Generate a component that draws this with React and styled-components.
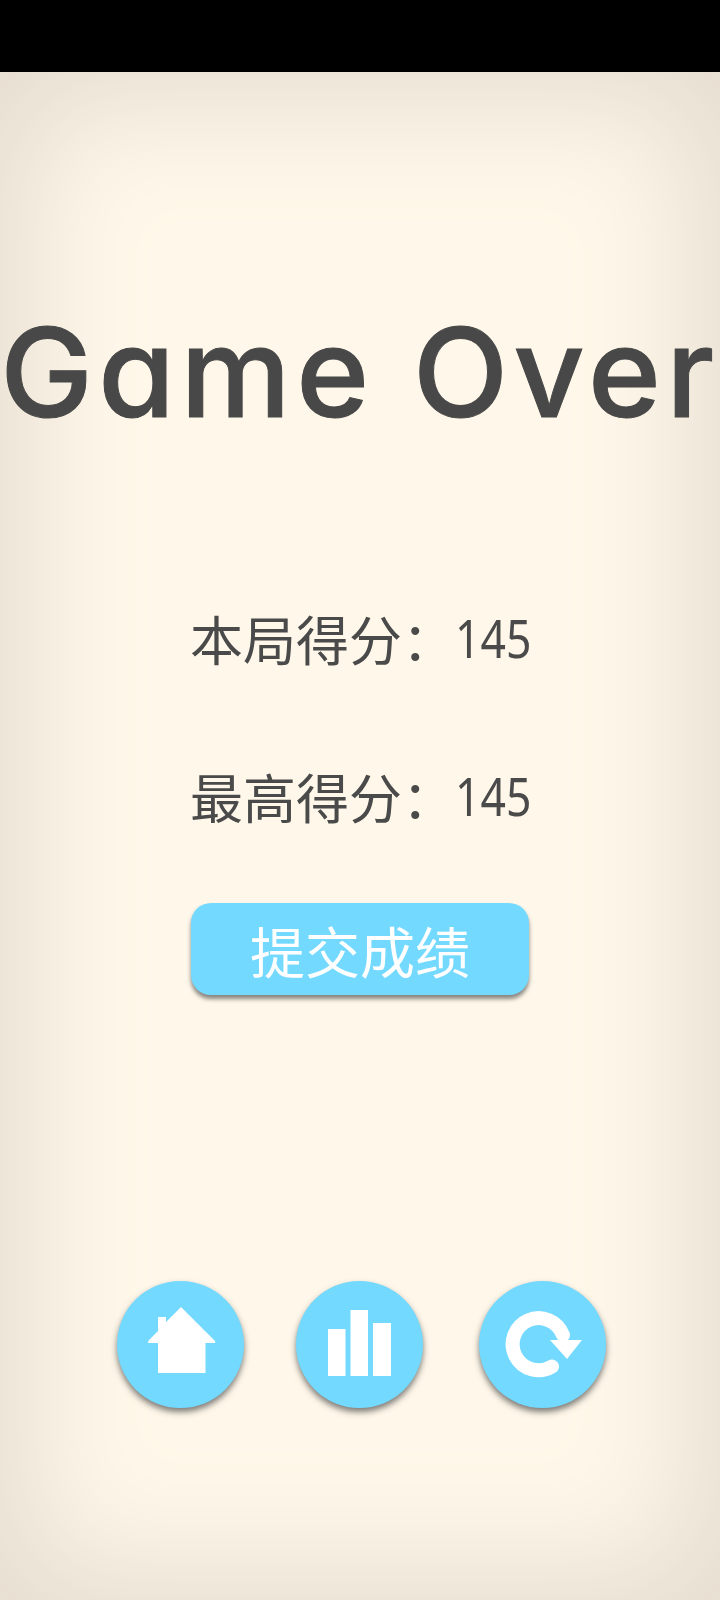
import React from 'react'
import styled, { createGlobalStyle } from 'styled-components'

const GlobalStyle = createGlobalStyle`
  html, body {
    margin: 0;
    padding: 0;
    background: #000;
  }
`

const Page = styled.div`
  width: 720px;
  height: 1600px;
  display: flex;
  flex-direction: column;
  overflow: hidden;
  font-family: "Noto Sans CJK SC", "Noto Sans", sans-serif;
`

const StatusBar = styled.div`
  height: 72px;
  flex: none;
  background: #000;
`

const Board = styled.main`
  flex: 1;
  display: flex;
  flex-direction: column;
  align-items: center;
  background: #fff8ea;
  box-shadow: inset 0 0 120px 32px #e6ddd0;
`

const Title = styled.h1`
  margin: 215px 0 0;
  height: 170px;
  line-height: 170px;
  font-family: Inter, "Noto Sans", sans-serif;
  font-feature-settings: "cv11" 1;
  font-size: 124px;
  font-weight: 500;
  letter-spacing: 5.5px;
  color: #484848;
  -webkit-text-stroke: 1px #484848;
  white-space: nowrap;
`

const Score = styled.p`
  margin: ${({ $top }) => $top}px 0 0;
  width: 340px;
  height: 70px;
  display: flex;
  align-items: center;
  font-size: 53px;
  line-height: 70px;
  color: #4a4a4a;
  white-space: nowrap;
`

const Digits = styled.span`
  display: inline-block;
  font-family: "Noto Sans", sans-serif;
  font-size: 53px;
  transform: scaleX(0.84);
  transform-origin: left center;
`

const SubmitButton = styled.button`
  margin-top: 72px;
  width: 338px;
  height: 92px;
  border: 0;
  border-radius: 20px;
  background: #73d9ff;
  color: #fff;
  font-family: inherit;
  font-size: 55px;
  box-shadow: 0 4px 4px rgba(70, 70, 70, 0.65);
`

const Actions = styled.div`
  margin-top: 286px;
  align-self: flex-start;
  padding-left: 117px;
  display: flex;
`

const RoundButton = styled.button`
  width: 127px;
  height: 127px;
  padding: 0;
  margin-left: ${({ $gap }) => $gap || 0}px;
  border: 0;
  border-radius: 50%;
  background: #73d9ff;
  box-shadow: 0 4px 6px rgba(70, 70, 70, 0.7);

  svg {
    display: block;
  }
`

const HomeIcon = () => (
  <svg width="127" height="127" viewBox="0 0 127 127" fill="#fff">
    <path d="M64 26 L98 60 Q99 62 97 62 L88.5 62 L88.5 92 L41 92 L41 62 L32 62 Q30 62 32 59 L41 50 L41 36 L49 36 L49 41 Z" />
  </svg>
)

const StatsIcon = () => (
  <svg width="127" height="127" viewBox="0 0 127 127" fill="#fff">
    <rect x="32" y="48" width="17.5" height="47" />
    <rect x="54.5" y="29" width="17.5" height="66" />
    <rect x="77" y="42" width="18" height="53" />
  </svg>
)

const ReplayIcon = () => (
  <svg width="127" height="127" viewBox="0 0 127 127" fill="none">
    <path d="M73 85.5 A26 26 0 1 1 84 54" stroke="#fff" strokeWidth="14" strokeLinecap="round" />
    <path d="M71 59 L103 59 L88 78 Z" fill="#fff" />
  </svg>
)

export default function App() {
  return (
    <Page>
      <GlobalStyle />
      <StatusBar />
      <Board>
        <Title>Game Over</Title>
        <Score $top={146}>
          <span>本局得分：</span>
          <Digits>145</Digits>
        </Score>
        <Score $top={88}>
          <span>最高得分：</span>
          <Digits>145</Digits>
        </Score>
        <SubmitButton>提交成绩</SubmitButton>
        <Actions>
          <RoundButton><HomeIcon /></RoundButton>
          <RoundButton $gap={52}><StatsIcon /></RoundButton>
          <RoundButton $gap={56}><ReplayIcon /></RoundButton>
        </Actions>
      </Board>
    </Page>
  )
}
